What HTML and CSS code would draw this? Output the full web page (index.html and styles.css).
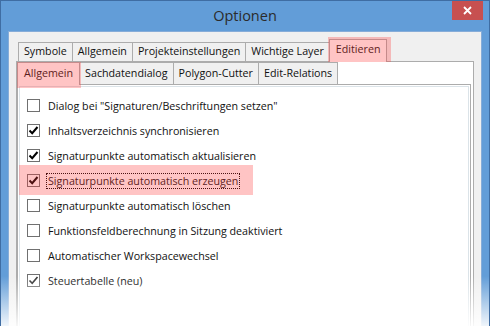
FILE: index.html
```html
<!DOCTYPE html>
<html lang="de">
  <head>
    <meta charset="UTF-8" />
    <title>Optionen</title>
    <link rel="stylesheet" href="styles.css">
  </head>
  <body>
    <div class="window">
      <div class="titlebar">
        <span></span>
        <span class="title">Optionen</span>
        <button class="close" type="button">
          <svg width="9" height="9" viewBox="0 0 9 9">
            <path d="M1 1 L8 8 M8 1 L1 8" stroke="#fff" stroke-width="1.8" fill="none" />
          </svg>
        </button>
      </div>

      <div class="client">
        <div class="tabs">
          <div class="tab">Symbole</div>
          <div class="tab">Allgemein</div>
          <div class="tab">Projekteinstellungen</div>
          <div class="tab">Wichtige Layer</div>
          <div class="tab active mark">Editieren</div>
        </div>

        <div class="panel">
          <div class="subtabs">
            <div class="subtab active mark">Allgemein</div>
            <div class="subtab">Sachdatendialog</div>
            <div class="subtab">Polygon-Cutter</div>
            <div class="subtab">Edit-Relations</div>
          </div>

          <div class="page">
            <div class="box">
              <label class="row">
                <span class="check"></span>
                <span class="label">Dialog bei "Signaturen/Beschriftungen setzen"</span>
              </label>
              <label class="row">
                <span class="check on"><svg width="11" height="11" viewBox="0 0 11 11"><path d="M1.5 5.5 L4.2 8.2 L9.5 2" /></svg></span>
                <span class="label">Inhaltsverzeichnis synchronisieren</span>
              </label>
              <label class="row">
                <span class="check on"><svg width="11" height="11" viewBox="0 0 11 11"><path d="M1.5 5.5 L4.2 8.2 L9.5 2" /></svg></span>
                <span class="label">Signaturpunkte automatisch aktualisieren</span>
              </label>
              <label class="row focus">
                <span class="check on"><svg width="11" height="11" viewBox="0 0 11 11"><path d="M1.5 5.5 L4.2 8.2 L9.5 2" /></svg></span>
                <span class="label">Signaturpunkte automatisch erzeugen</span>
              </label>
              <label class="row">
                <span class="check"></span>
                <span class="label">Signaturpunkte automatisch löschen</span>
              </label>
              <label class="row">
                <span class="check"></span>
                <span class="label">Funktionsfeldberechnung in Sitzung deaktiviert</span>
              </label>
              <label class="row">
                <span class="check"></span>
                <span class="label">Automatischer Workspacewechsel</span>
              </label>
              <label class="row">
                <span class="check on dim"><svg width="11" height="11" viewBox="0 0 11 11"><path d="M1.5 5.5 L4.2 8.2 L9.5 2" /></svg></span>
                <span class="label">Steuertabelle (neu)</span>
              </label>
            </div>
          </div>
        </div>
      </div>

      <div class="fade"></div>
    </div>
  </body>
</html>
```

FILE: styles.css
```css
html,
body {
  margin: 0;
  background: #ffffff;
  font-family: "Open Sans", "Noto Sans", Arial, sans-serif;
  overflow: hidden;
}
* {
  box-sizing: border-box;
}
.window {
  position: relative;
  width: 490px;
  height: 326px;
  display: flex;
  flex-direction: column;
  background: #629dd8;
  border-left: 1px solid #3f6da3;
  border-right: 1px solid #3f6da3;
  border-top: 1px solid #3f6da3;
  overflow: hidden;
}
.titlebar {
  display: grid;
  grid-template-columns: 1fr auto 1fr;
  height: 30px;
  flex: none;
}
.title {
  font-size: 14.5px;
  line-height: 30px;
  color: #2b2b2b;
}
.close {
  justify-self: end;
  align-self: start;
  width: 31px;
  height: 19px;
  margin-right: 6px;
  padding: 0;
  border: 0;
  background: #c75050;
  display: flex;
  align-items: center;
  justify-content: center;
}
.client {
  flex: 1;
  margin: 0 7px;
  background: #f0f0f0;
  border: 1px solid #86acd8;
  border-bottom: 0;
  padding: 7px 7px 0 7px;
  display: flex;
  flex-direction: column;
  font-size: 10.7px;
  color: #111;
}

/* outer tabs */
.tabs {
  display: flex;
  align-items: flex-end;
  height: 22px;
  padding-left: 2px;
  position: relative;
  z-index: 2;
}
.tab {
  height: 19px;
  line-height: 17px;
  padding: 0 5px;
  border: 1px solid #acacac;
  border-bottom: 0;
  background: #f0f0f0;
  margin-right: -1px;
  white-space: nowrap;
}
.tab.active {
  height: 23px;
  margin-bottom: -1px;
  background: #ffffff;
  line-height: 19px;
  padding: 0 6px;
}
.mark {
  position: relative;
}
.mark::after {
  content: '';
  position: absolute;
  background: rgba(255, 60, 60, 0.3);
  pointer-events: none;
}
.tab.mark::after {
  top: -3px;
  left: -2px;
  right: -5px;
  bottom: 0;
}
.panel {
  flex: 1;
  background: #ffffff;
  border: 1px solid #acacac;
  border-bottom: 0;
  display: flex;
  flex-direction: column;
}

/* inner tabs */
.subtabs {
  display: flex;
  height: 22px;
  position: relative;
  z-index: 2;
}
.subtab {
  height: 22px;
  line-height: 20px;
  padding: 0 5px;
  border: 1px solid #acacac;
  border-bottom: 0;
  background: #f0f0f0;
  margin-right: -1px;
  white-space: nowrap;
}
.subtab.active {
  height: 23px;
  background: #ffffff;
  padding: 0 6px;
}
.subtab.mark::after {
  top: -1px;
  left: -1px;
  right: -2px;
  bottom: -3px;
}
.page {
  flex: 1;
  margin-right: 2px;
  border: 1px solid #acacac;
  border-bottom: 0;
  padding: 1px 1px 0 1px;
  display: flex;
}
.box {
  flex: 1;
  border: 1px solid #dbe3e8;
  border-bottom: 0;
  padding: 6px 0 0 7px;
}

/* checkbox rows */
.row {
  display: flex;
  align-items: center;
  height: 25px;
  gap: 6px;
}
.check {
  width: 13px;
  height: 13px;
  flex: none;
  border: 1px solid #707070;
  background: #ffffff;
  display: flex;
  align-items: center;
  justify-content: center;
}
.check svg path {
  fill: none;
  stroke: #000;
  stroke-width: 2;
}
.check.dim svg path {
  stroke: #333;
  stroke-width: 1.6;
}
.label {
  padding: 0 1px;
  border: 1px dotted transparent;
  line-height: 14px;
  white-space: nowrap;
}
.row.focus {
  position: relative;
}
.row.focus .label {
  border-color: #000;
}
.row.focus::after {
  content: '';
  position: absolute;
  top: -3px;
  bottom: -2px;
  left: -8px;
  width: 234px;
  background: rgba(255, 60, 60, 0.3);
}

/* screenshot fades out at the bottom */
.fade {
  position: absolute;
  left: -1px;
  right: -1px;
  bottom: 0;
  height: 50px;
  background: linear-gradient(to bottom, rgba(255, 255, 255, 0), rgba(255, 255, 255, 0.9));
  pointer-events: none;
}
```
